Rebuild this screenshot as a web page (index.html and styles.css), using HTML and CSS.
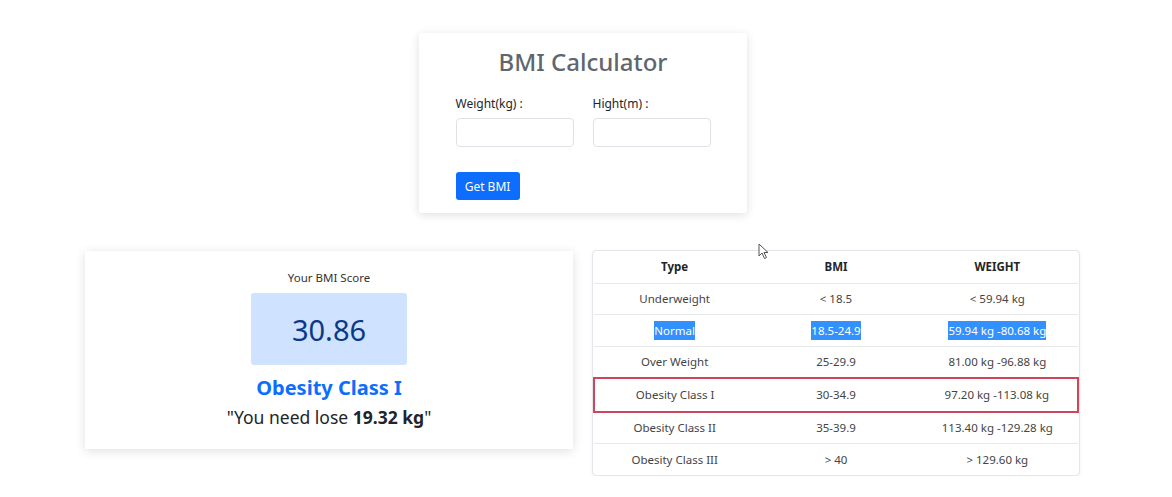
FILE: index.html
```html
<!DOCTYPE html>
<html lang="en">
<head>
<meta charset="utf-8">
<title>BMI Calculator</title>
<link rel="stylesheet" href="styles.css">
</head>
<body>
<div class="page">
  <section class="calc-card">
    <h1 class="calc-title">BMI Calculator</h1>
    <div class="fields">
      <div class="field">
        <label class="field-label">Weight(kg) :</label>
        <input class="field-input" type="text">
      </div>
      <div class="field">
        <label class="field-label">Hight(m) :</label>
        <input class="field-input" type="text">
      </div>
    </div>
    <button class="btn-primary" type="button">Get BMI</button>
  </section>

  <div class="results">
    <section class="score-card">
      <div class="score-label">Your BMI Score</div>
      <div class="score-box">30.86</div>
      <div class="score-class">Obesity Class I</div>
      <div class="score-advice">"You need lose <b>19.32 kg</b>"</div>
    </section>

    <section class="table-card">
      <table class="bmi-table">
        <thead>
          <tr><th>Type</th><th>BMI</th><th>WEIGHT</th></tr>
        </thead>
        <tbody>
          <tr><td>Underweight</td><td>&lt; 18.5</td><td>&lt; 59.94 kg</td></tr>
          <tr class="selected"><td><span class="sel">Normal</span></td><td><span class="sel">18.5-24.9</span></td><td><span class="sel">59.94 kg -80.68 kg</span></td></tr>
          <tr><td>Over Weight</td><td>25-29.9</td><td>81.00 kg -96.88 kg</td></tr>
          <tr class="active"><td>Obesity Class I</td><td>30-34.9</td><td>97.20 kg -113.08 kg</td></tr>
          <tr><td>Obesity Class II</td><td>35-39.9</td><td>113.40 kg -129.28 kg</td></tr>
          <tr><td>Obesity Class III</td><td>&gt; 40</td><td>&gt; 129.60 kg</td></tr>
        </tbody>
      </table>
      <svg class="cursor" width="12" height="17" viewBox="0 0 12 17"><path d="M1 1 L1 13 L4 10 L6.5 15.5 L8.5 14.5 L6 9.5 L10 9.5 Z" fill="#fff" stroke="#555" stroke-width="1" stroke-linejoin="round"/></svg>
    </section>
  </div>
</div>
</body>
</html>
```

FILE: styles.css
```css
* { box-sizing: border-box; }
html, body { margin: 0; padding: 0; background: #fff; }
body {
  font-family: "Noto Sans", "Open Sans", sans-serif;
  color: #212529;
  padding-right: 7px;
}
.page {
  width: 995px;
  margin: 0 auto;
  padding-top: 33px;
  display: flex;
  flex-direction: column;
  align-items: center;
}
.calc-card {
  width: 328px;
  height: 180px;
  background: #fff;
  box-shadow: 0 2px 10px rgba(0,0,0,0.13);
  border-radius: 3px;
  padding: 12px 36px 0 37px;
}
.calc-title {
  margin: 0;
  text-align: center;
  font-size: 24px;
  font-weight: 500;
  color: #5f666d;
  line-height: 34px;
}
.fields {
  display: flex;
  gap: 19px;
  margin-top: 17px;
}
.field { width: 118px; display: flex; flex-direction: column; }
.field-label {
  font-size: 12px;
  line-height: 16px;
  color: #212529;
  margin-bottom: 6px;
}
.field-input {
  width: 118px;
  height: 29px;
  border: 1px solid #dee2e6;
  border-radius: 4px;
  background: #fff;
}
.btn-primary {
  display: block;
  margin-top: 25px;
  width: 64px;
  height: 28px;
  background: #0d6efd;
  color: #fff;
  border: none;
  border-radius: 3px;
  font-family: inherit;
  font-size: 12px;
  padding: 0;
}
.results {
  display: flex;
  gap: 19px;
  margin-top: 37px;
  align-items: flex-start;
  width: 995px;
}
.score-card {
  width: 488px;
  height: 198px;
  margin-top: 1px;
  background: #fff;
  box-shadow: 0 2px 10px rgba(0,0,0,0.13);
  display: flex;
  flex-direction: column;
  align-items: center;
  padding-top: 19px;
}
.score-label {
  font-size: 11.5px;
  line-height: 16px;
  color: #333;
}
.score-box {
  margin-top: 7px;
  width: 156px;
  height: 72px;
  background: #cfe2ff;
  border-radius: 3px;
  color: #0a3a86;
  font-size: 29px;
  display: flex;
  align-items: center;
  justify-content: center;
}
.score-class {
  margin-top: 9px;
  font-size: 20px;
  font-weight: 700;
  color: #0d6efd;
  line-height: 28px;
}
.score-advice {
  margin-top: 3px;
  font-size: 17.5px;
  line-height: 24px;
  color: #212529;
}
.score-advice b { font-weight: 700; }
.table-card {
  position: relative;
  width: 488px;
  border: 1px solid #e3e6ea;
  border-radius: 4px;
  box-shadow: 0 1px 4px rgba(0,0,0,0.06);
  background: #fff;
}
.bmi-table {
  width: 100%;
  border-collapse: collapse;
  table-layout: fixed;
  font-size: 11.5px;
  color: #444;
}
.bmi-table th, .bmi-table td {
  text-align: center;
  height: 31.5px;
  padding: 0;
  border-bottom: 1px solid #e6e8eb;
}
.bmi-table th { color: #212529; font-weight: 700; height: 32px; }
.bmi-table tbody tr:last-child td { border-bottom: none; }
.bmi-table tr.active td {
  height: 34px;
  border-top: 2px solid #d0455a;
  border-bottom: 2px solid #d0455a;
}
.bmi-table tr.active td:first-child { border-left: 2px solid #d0455a; }
.bmi-table tr.active td:last-child { border-right: 2px solid #d0455a; }
.sel {
  background: #3390ff;
  color: #fff;
  padding: 2px 0;
}
.cursor {
  position: absolute;
  left: 165px;
  top: -8px;
}
```
